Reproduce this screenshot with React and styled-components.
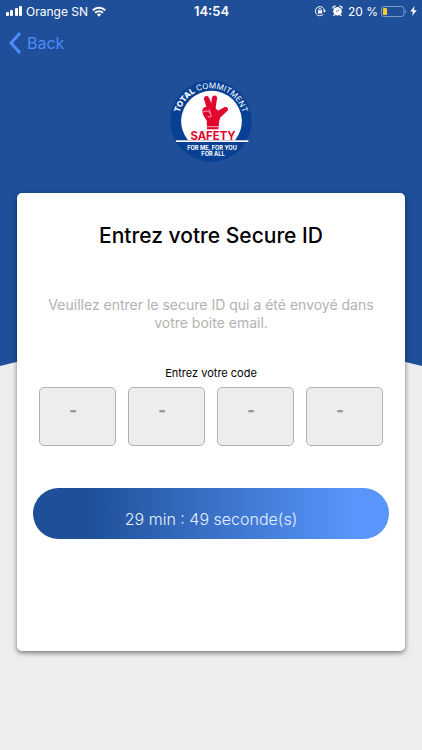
import React, { useState } from 'react'
import { styled, createGlobalStyle } from 'styled-components'

const digits = [1, 2, 3, 4]

const SignalIcon = () => (
  <svg width="16" height="10" viewBox="0 0 16 10" fill="#fff" aria-hidden="true">
    <rect x="0" y="6" width="3" height="4" rx="1" />
    <rect x="4" y="4" width="3" height="6" rx="1" />
    <rect x="9" y="2" width="3" height="8" rx="1" />
    <rect x="13" y="0" width="3" height="10" rx="1" />
  </svg>
)

const WifiIcon = () => (
  <svg width="14" height="11" viewBox="0 0 14 11" fill="none" stroke="#fff" strokeWidth="2" aria-hidden="true">
    <path d="M0.8 4.2a8.8 8.8 0 0 1 12.4 0" />
    <path d="M3.1 6.8a5.6 5.6 0 0 1 7.8 0" />
    <path d="M7 10.8 4.8 8.6a3.2 3.2 0 0 1 4.4 0z" fill="#fff" stroke="none" />
  </svg>
)

const RotationLockIcon = () => (
  <svg width="12" height="12" viewBox="0 0 12 12" fill="none" stroke="#fff" aria-hidden="true">
    <path d="M9.3 9.3A4.6 4.6 0 1 1 10.5 5.6" />
    <path d="M8.7 5.4h3.3L10.4 7.6z" fill="#fff" stroke="none" />
    <rect x="3.9" y="5.2" width="4.2" height="3.2" rx="0.4" fill="#fff" stroke="none" />
    <path d="M4.8 5.4V4.4a1.2 1.2 0 0 1 2.4 0v1" strokeWidth="0.8" />
  </svg>
)

const AlarmIcon = () => (
  <svg width="11" height="12" viewBox="0 0 11 12" fill="none" aria-hidden="true">
    <circle cx="5.5" cy="6.2" r="4.3" fill="#fff" />
    <path d="M0.8 3.6A2.4 2.4 0 0 1 3.6 1.2M10.2 3.6A2.4 2.4 0 0 0 7.4 1.2M2.6 9.6l-1 1.3M8.4 9.6l1 1.3" stroke="#fff" strokeWidth="1.4" />
    <path d="M7.2 4.6 5.5 6.4 4 5.9" stroke="#1f4f98" strokeWidth="0.8" />
  </svg>
)

const BatteryIcon = () => (
  <svg width="26" height="11" viewBox="0 0 26 11" fill="none" aria-hidden="true">
    <rect x="0.5" y="0.5" width="22.5" height="10" rx="2.5" stroke="#7f9cc6" />
    <rect x="2" y="2" width="4" height="7" rx="0.8" fill="#fbcb2e" />
    <path d="M24.3 3.8c1.4.5 1.4 2.9 0 3.4z" fill="#7f9cc6" />
  </svg>
)

const BoltIcon = () => (
  <svg width="7" height="10" viewBox="0 0 7 10" fill="#fff" aria-hidden="true">
    <path d="M4.6 0 0.3 5.6h2.6L2.1 10l4.6-5.8H3.9z" />
  </svg>
)

const SafetyLogo = () => (
  <svg width="82" height="82" viewBox="27 29 246 246" role="img" aria-label="Total Commitment Safety">
    <defs>
      <path id="logo-arc" d="M55.5 178.4A98 98 0 1 1 244.5 178.4" />
    </defs>
    <circle cx="150" cy="152" r="122" fill="#084194" />
    <path d="M81 210A91 91 0 1 1 222 210z" fill="#fff" />
    <rect x="45" y="210" width="217" height="5" fill="#fff" />
    <g fill="#e2062f">
      <path d="M137 140h38v10l-3 27h-34z" />
      <path d="M134 146c-6-8-12-20-9-29 2-6 8-8 14-6l24 2 14 14c1 8 1 14-2 23h-38z" />
      <path d="M138 116 129 87c-3-10 12-14 15-5l14 34z" />
      <path d="M148 114 153 82c2-10 17-8 15 3l-5 34z" />
      <path d="M162 126l28-15c9-4 15 6 8 12l-26 24z" />
    </g>
    <path d="M126 126c7-6 14-4 21 1M144 117l6 17c2 6-4 8-10 4M138 169h35" fill="none" stroke="#fff" strokeWidth="2" />
    <LogoText x="156" y="208" $size={34} $weight={700} $color="#e2062f">SAFETY</LogoText>
    <LogoText x="153" y="238" $size={17} $weight={700}>FOR ME, FOR YOU</LogoText>
    <LogoText x="156" y="258" $size={17} $weight={700}>FOR ALL</LogoText>
    <LogoText $size={24} $weight={400}>
      <textPath href="#logo-arc" startOffset="50%">
        <tspan fontWeight="800">TOTAL</tspan> COMMITMENT
      </textPath>
    </LogoText>
  </svg>
)

const App = () => {
  const [code, setCode] = useState(['', '', '', ''])

  const handleChange = (index, value) => {
    setCode(code.map((c, i) => (i === index ? value : c)))
  }

  return (
    <>
    <GlobalStyle />
    <Page>
        <Backdrop />
        <Screen>
            <StatusBar>
                <StatusGroup>
                    <SignalIcon />
                    <span>Orange SN</span>
                    <WifiIcon />
                </StatusGroup>
                <Clock>14:54</Clock>
                <StatusGroup $end>
                    <IconPair>
                        <RotationLockIcon />
                        <AlarmIcon />
                    </IconPair>
                    <span>20 %</span>
                    <BatteryIcon />
                    <BoltIcon />
                </StatusGroup>
            </StatusBar>

            <NavBar>
                <BackButton type="button">
                    <svg width="12" height="22" viewBox="0 0 12 22" fill="none" stroke="currentColor" strokeWidth="3" aria-hidden="true">
                        <path d="M11 1 2 11l9 10" />
                    </svg>
                    Back
                </BackButton>
            </NavBar>

            <LogoArea>
                <SafetyLogo />
            </LogoArea>

            <Card>
                <Title>Entrez votre Secure ID</Title>
                <Description>Veuillez entrer le secure ID qui a été envoyé dans votre boite email.</Description>
                <CodeGroup>
                    <CodeLabel htmlFor="code-1">Entrez votre code</CodeLabel>
                    <CodeRow>
                        {digits.map((digit, index) => (
                            <CodeInput
                                key={digit}
                                id={`code-${digit}`}
                                aria-label={index ? `Code ${digit}` : undefined}
                                placeholder="-"
                                maxLength={1}
                                inputMode="numeric"
                                value={code[index]}
                                onChange={(e) => handleChange(index, e.target.value)}
                            />
                        ))}
                    </CodeRow>
                </CodeGroup>
                <TimerButton type="button">29 min : 49 seconde(s)</TimerButton>
            </Card>
        </Screen>
    </Page>
    </>
  )
}

const GlobalStyle = createGlobalStyle`
    *{
        box-sizing: border-box;
    }
    body{
        margin: 0;
        background-color: #ededed;
        font-family: Inter, "Liberation Sans", sans-serif;
    }
    button, input{
        font-family: inherit;
    }
`;

const Page = styled.div`
    display: grid;
    min-height: 100vh;
    background-color: #ededed;
`;

const Backdrop = styled.div`
    grid-area: 1 / 1;
    height: 366px;
    background-color: #1f4f98;
    clip-path: polygon(0 0, 100% 0, 100% 100%, 50% 86%, 0 100%);
`;

const Screen = styled.div`
    grid-area: 1 / 1;
    z-index: 1;
    display: flex;
    flex-direction: column;
    min-width: 0;
`;

const StatusBar = styled.header`
    display: grid;
    grid-template-columns: 1fr auto 1fr;
    align-items: center;
    height: 22px;
    padding: 0 5px 0 6px;
    color: #fff;
    font-size: 12px;
`;

const StatusGroup = styled.div`
    display: flex;
    align-items: center;
    justify-content: ${(props) => (props.$end ? 'flex-end' : 'flex-start')};
    gap: ${(props) => (props.$end ? 3 : 4)}px;
    white-space: nowrap;
`;

const IconPair = styled.div`
    display: flex;
    gap: 6px;
    margin-right: 2px;
`;

const Clock = styled.span`
    font-size: 13px;
    font-weight: 600;
`;

const NavBar = styled.nav`
    display: flex;
    align-items: center;
    height: 42px;
    padding: 0 9px;
`;

const BackButton = styled.button`
    display: flex;
    align-items: center;
    gap: 6px;
    padding: 0;
    border: none;
    background: none;
    color: #4c8bf8;
    font-size: 16px;
    cursor: pointer;
`;

const LogoArea = styled.div`
    display: flex;
    justify-content: center;
    padding: 16px 0 31px;
`;

const LogoText = styled.text`
    font-size: ${(props) => props.$size}px;
    font-weight: ${(props) => props.$weight};
    fill: ${(props) => props.$color || '#fff'};
    text-anchor: middle;
`;

const Card = styled.main`
    display: flex;
    flex-direction: column;
    margin: 0 17px 40px;
    padding: 29px 16px 112px;
    border-radius: 5px;
    background-color: #fff;
    box-shadow: 0 2px 5px rgba(0, 0, 0, 0.5);
`;

const Title = styled.h1`
    margin: 0;
    color: #000;
    font-size: 21px;
    font-weight: 500;
    line-height: 28px;
    text-align: center;
`;

const Description = styled.p`
    margin: 46px 0 0;
    padding: 0 8px;
    color: #b2b2b2;
    font-size: 14px;
    line-height: 18px;
    text-align: center;
`;

const CodeGroup = styled.div`
    display: flex;
    flex-direction: column;
    margin-top: 34px;
    padding: 0 6px;
`;

const CodeLabel = styled.label`
    color: #000;
    font-size: 11px;
    line-height: 14px;
    text-align: center;
`;

const CodeRow = styled.div`
    display: grid;
    grid-template-columns: repeat(4, 1fr);
    gap: 12px;
    margin-top: 7px;
`;

const CodeInput = styled.input`
    width: 100%;
    height: 59px;
    padding: 0 9px 14px 0;
    border: 1px solid #b0b0b0;
    border-radius: 5px;
    background-color: #ededed;
    color: #333;
    font-size: 16px;
    font-weight: 900;
    text-align: center;

    &::placeholder{
        color: #999;
        opacity: 1;
    }
`;

const TimerButton = styled.button`
    height: 51px;
    margin-top: 42px;
    padding: 10px 0 0;
    border: none;
    border-radius: 26px;
    background: linear-gradient(90deg, #1f4f98 15%, #5896fb 90%);
    color: #e6f0ff;
    font-size: 16px;
    font-weight: 300;
    cursor: pointer;
`;

export default App
